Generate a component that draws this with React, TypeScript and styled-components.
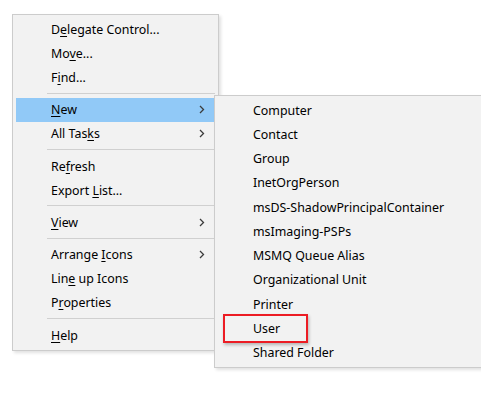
import React from "react";
import styled, { createGlobalStyle } from "styled-components";

const GlobalStyle = createGlobalStyle`
  html, body {
    margin: 0;
    padding: 0;
    background: #ffffff;
  }
  body {
    font-family: "Noto Sans", "Open Sans", "Liberation Sans", sans-serif;
    font-size: 12.4px;
    color: #000;
  }
`;

const Page = styled.div`
  width: 481px;
  height: 397px;
  position: relative;
  overflow: hidden;
  padding: 14px 0 0 12px;
  box-sizing: border-box;
`;

const Menu = styled.div`
  width: 207px;
  box-sizing: border-box;
  background: #f2f2f2;
  border: 1px solid #cccccc;
  padding: 2px 3px 3px 3px;
  box-shadow: 2px 2px 3px rgba(0, 0, 0, 0.12);
  display: flex;
  flex-direction: column;
  position: relative;
`;

const Item = styled.div<{ $active?: boolean }>`
  height: 24.2px;
  display: flex;
  align-items: center;
  padding-left: 35px;
  padding-right: 8px;
  background: ${(p) => (p.$active ? "#91c9f7" : "transparent")};
  position: relative;
  u {
    text-decoration: underline;
    text-underline-offset: 2px;
  }
`;

const Label = styled.span`
  flex: 1;
  white-space: nowrap;
`;

const Arrow = styled.svg`
  width: 6px;
  height: 9px;
  margin-right: 2px;
`;

const Separator = styled.div`
  height: 1px;
  background: #d0d0d0;
  margin: 3px 0 4px 31px;
`;

const SubMenu = styled.div`
  position: absolute;
  left: 201px;
  top: 80px;
  width: 290px;
  box-sizing: border-box;
  background: #f2f2f2;
  border: 1px solid #cccccc;
  padding: 2px 0 2px 3px;
  box-shadow: 2px 2px 3px rgba(0, 0, 0, 0.12);
  display: flex;
  flex-direction: column;
`;

const SubItem = styled.div`
  height: 24.25px;
  display: flex;
  align-items: center;
  padding-left: 35px;
  white-space: nowrap;
  position: relative;
`;

const Callout = styled.div`
  position: absolute;
  left: 5px;
  top: -2px;
  width: 85px;
  height: 29px;
  box-sizing: border-box;
  border: 2px solid #ec1c24;
  box-shadow: 1px 2px 3px rgba(0, 0, 0, 0.25);
  pointer-events: none;
`;

const Chevron = () => (
  <Arrow viewBox="0 0 6 9">
    <path d="M1 1 L4.5 4.5 L1 8" fill="none" stroke="#3c3c3c" strokeWidth="1.3" />
  </Arrow>
);

const newItems = [
  "Computer",
  "Contact",
  "Group",
  "InetOrgPerson",
  "msDS-ShadowPrincipalContainer",
  "msImaging-PSPs",
  "MSMQ Queue Alias",
  "Organizational Unit",
  "Printer",
  "User",
  "Shared Folder",
];

export default function App() {
  return (
    <>
      <GlobalStyle />
      <Page>
        <Menu>
          <Item><Label>D<u>e</u>legate Control...</Label></Item>
          <Item><Label>Mo<u>v</u>e...</Label></Item>
          <Item><Label>F<u>i</u>nd...</Label></Item>
          <Separator />
          <Item $active><Label><u>N</u>ew</Label><Chevron /></Item>
          <Item><Label>All Tas<u>k</u>s</Label><Chevron /></Item>
          <Separator />
          <Item><Label>Re<u>f</u>resh</Label></Item>
          <Item><Label>Export <u>L</u>ist...</Label></Item>
          <Separator />
          <Item><Label><u>V</u>iew</Label><Chevron /></Item>
          <Separator />
          <Item><Label>Arrange <u>I</u>cons</Label><Chevron /></Item>
          <Item><Label>Lin<u>e</u> up Icons</Label></Item>
          <Item><Label>P<u>r</u>operties</Label></Item>
          <Separator />
          <Item><Label><u>H</u>elp</Label></Item>
          <SubMenu>
            {newItems.map((name) => (
              <SubItem key={name}>
                {name}
                {name === "User" && <Callout />}
              </SubItem>
            ))}
          </SubMenu>
        </Menu>
      </Page>
    </>
  );
}
